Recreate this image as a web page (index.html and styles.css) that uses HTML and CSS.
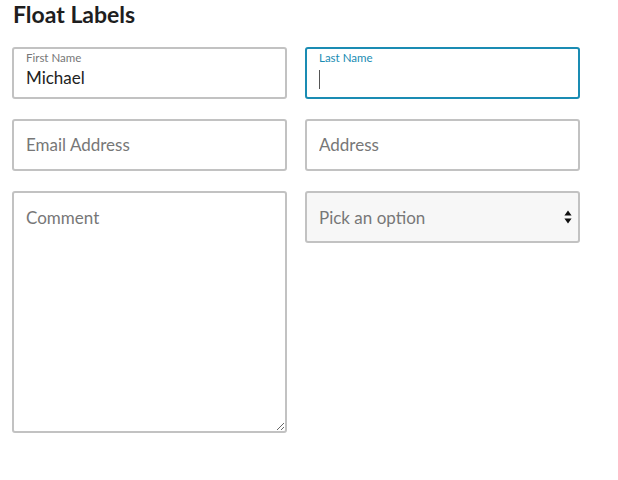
FILE: index.html
```html
<!DOCTYPE html>
<html>
<head>
<meta charset="utf-8">
<link rel="stylesheet" href="styles.css">
</head>
<body>
<h1 class="title">Float Labels</h1>
<form class="grid">
  <div class="field filled">
    <label class="lbl">First Name</label>
    <input class="inp" type="text" value="Michael">
  </div>
  <div class="field filled focus">
    <label class="lbl">Last Name</label>
    <div class="inp caretwrap"><span class="caret"></span></div>
  </div>
  <div class="field">
    <input class="inp ph" type="text" placeholder="Email Address">
  </div>
  <div class="field">
    <input class="inp ph" type="text" placeholder="Address">
  </div>
  <div class="field tall">
    <textarea class="area" placeholder="Comment"></textarea>
  </div>
  <div class="field sel">
    <span class="seltext">Pick an option</span>
    <svg class="arrows" width="8" height="14" viewBox="0 0 8 14"><path d="M4 0.5 L7.6 5.5 H0.4 Z M4 13.5 L7.6 8.5 H0.4 Z" fill="#111"/></svg>
  </div>
</form>
</body>
</html>
```
FILE: styles.css
```css
html, body { margin: 0; padding: 0; background: #fff; }
body { font-family: Lato, "Open Sans", sans-serif; padding: 0 12px; }
.title { margin: 0; padding-top: 0; font-size: 23px; font-weight: 700; color: #1e1e1e; line-height: 28px; height: 47px; padding-left: 1px; }
.grid { display: grid; grid-template-columns: 275px 275px; column-gap: 18px; row-gap: 20px; align-items: start; }
.field { box-sizing: border-box; height: 52px; border: 2px solid #c2c2c2; border-radius: 3px; background: #fff; position: relative; display: flex; flex-direction: column; justify-content: center; padding: 0 12px; }
.field.filled { justify-content: flex-start; padding-top: 2px; }
.field.focus { border-color: #1a8cb3; }
.lbl { font-size: 11.5px; color: #777; line-height: 13px; height: 15px; }
.focus .lbl { color: #1a8cb3; }
.inp { border: 0; outline: 0; padding: 0; margin: 0; font-family: inherit; font-size: 17px; color: #222; background: transparent; width: 100%; height: 24px; line-height: 24px; }
.inp.ph::placeholder { color: #777; }
.caretwrap { display: flex; align-items: center; }
.caret { display: block; width: 1px; height: 19px; background: #555; margin-top: 2px; }
.tall { height: 242px; padding: 0; justify-content: flex-start; }
.area { border: 0; outline: 0; margin: 0; width: 100%; height: 100%; box-sizing: border-box; padding: 14px 12px; font-family: inherit; font-size: 17px; resize: both; background: transparent; color: #222; }
.area::placeholder { color: #777; }
.sel { background: #f7f7f7; flex-direction: row; align-items: center; justify-content: space-between; padding-right: 6px; }
.seltext { font-size: 17px; color: #777; }
.arrows { display: block; }
```
